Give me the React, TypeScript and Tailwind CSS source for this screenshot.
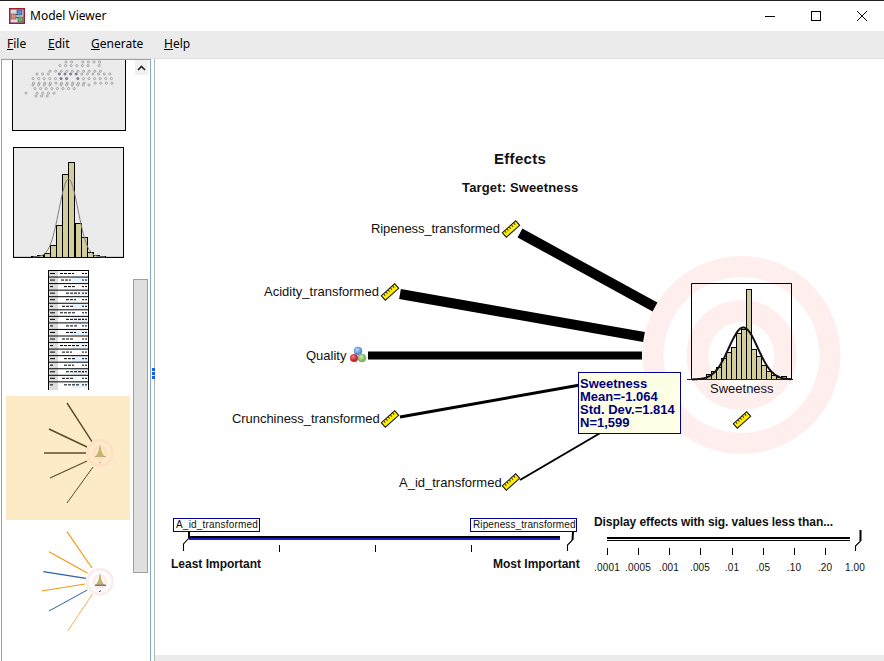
const sans = "font-['Liberation_Sans',Arial,sans-serif]";
const ui = "font-['Noto_Sans',sans-serif]";

const bell = (cx: number, base: number, h: number, sigma: number, from: number, to: number) => {
  const pts: string[] = [];
  for (let x = from; x <= to; x += 1) {
    const y = base - h * Math.exp(-((x - cx) * (x - cx)) / (2 * sigma * sigma));
    pts.push(`${x},${y.toFixed(1)}`);
  }
  return pts.join(" ");
};

function Ruler({ x, y }: { x: number; y: number }) {
  return (
    <g transform={`translate(${x} ${y}) rotate(-42)`}>
      <rect x="-9" y="-3" width="18" height="6" fill="#ffee00" stroke="#111" strokeWidth="1" />
      {[-6, -3, 0, 3, 6].map((t) => (
        <line key={t} x1={t} y1="-2.5" x2={t} y2="-0.5" stroke="#333" strokeWidth="1" />
      ))}
    </g>
  );
}

function AppIcon() {
  return (
    <svg width="16" height="16" viewBox="0 0 16 16">
      <rect x="0.75" y="0.75" width="14.5" height="14.5" fill="#d8d8ea" stroke="#9c1c30" strokeWidth="1.5" />
      <line x1="5" y1="8" x2="10" y2="5" stroke="#444" />
      <line x1="5" y1="8" x2="11" y2="11" stroke="#444" />
      <rect x="2" y="6" width="5" height="5" fill="#e08a70" stroke="#555" strokeWidth="0.6" />
      <rect x="8" y="2" width="5" height="5" fill="#5a8ecc" stroke="#345" strokeWidth="0.6" />
      <rect x="9" y="9" width="5" height="5" fill="#76b060" stroke="#354" strokeWidth="0.6" />
    </svg>
  );
}

// rows of the scatter thumbnail, y / first x / last x in page pixels
const scatterRows: [number, number, number][] = [
  [62, 66, 100],
  [65, 60, 100],
  [70, 50, 110],
  [74, 37, 110],
  [78, 33, 115],
  [82, 28, 116],
  [85, 33, 92],
  [88, 35, 85],
  [92, 26, 55],
  [96, 36, 50],
];

function ScatterThumb() {
  const dots: { x: number; y: number; d: number }[] = [];
  scatterRows.forEach(([y, a, b], r) => {
    for (let x = a, i = 0; x <= b; x += 5.6, i += 1) {
      if ((i * 7 + r * 5) % 11 === 3) continue;
      const k = Math.abs(x - 68) / 24 + Math.abs(y - 76) / 7;
      dots.push({ x: x - 12, y: y - 60 + ((i * 3 + r) % 3) * 0.6, d: k });
    }
  });
  return (
    <svg width="114" height="72" viewBox="0 0 114 72" className="block">
      <rect x="0.5" y="-2" width="113" height="72.5" fill="#ebebeb" stroke="#000" />
      {dots.map((p, i) => (
        <circle key={i} cx={p.x} cy={p.y} r="1.1" fill={p.d < 0.8 ? "#8a8aa0" : "#e4e4e4"} stroke={p.d < 0.8 ? "#606078" : "#909090"} strokeWidth="0.7" />
      ))}
    </svg>
  );
}

const histBars = [
  [18, 109], [24, 108], [31, 106], [37, 98], [43, 78], [49, 27], [55, 15], [62, 76], [68, 90], [74, 105], [80, 108], [86, 109],
];

function HistThumb() {
  return (
    <svg width="112" height="112" viewBox="0 0 112 112" className="block">
      <rect x="0.5" y="0.5" width="110" height="110" fill="#ebebeb" stroke="#000" />
      <line x1="1" y1="109.5" x2="110" y2="109.5" stroke="#ccc" />
      {histBars.map(([x, t], i) => (
        <rect key={i} x={x + 0.5} y={t + 0.5} width="6" height={110 - t} fill="#d2cd9a" stroke="#000" />
      ))}
      <polyline points={bell(55.5, 110, 78, 9.5, 20, 92)} fill="none" stroke="#808080" />
    </svg>
  );
}

const dashRows = [
  [14, 2, 20, 9], [10, 3, 22, 10], [12, 6, 20, 8], [14, 8, 24, 6], [10, 8, 18, 6], [12, 4, 22, 12],
  [16, 2, 24, 4], [18, 8, 28, 0], [12, 8, 20, 6], [10, 8, 18, 12], [12, 4, 24, 0], [20, 2, 30, 6],
  [10, 4, 26, 0], [12, 6, 24, 8], [10, 6, 22, 12], [18, 8, 26, 0], [12, 4, 20, 8], [16, 6, 26, 0],
];

function TableThumb() {
  return (
    <svg width="41" height="120" viewBox="0 0 41 120" className="block">
      <rect x="0" y="0" width="41" height="120" fill="#fff" />
      <rect x="1" y="0" width="9" height="120" fill="#dcdcdc" />
      {dashRows.map((r, i) => (
        <g key={i}>
          {i % 2 === 1 && <rect x="24" y={i * 6.55} width="16" height="6.5" fill="#e8f3fb" />}
          <line x1="0" y1={i * 6.55 + 0.5} x2="41" y2={i * 6.55 + 0.5} stroke="#000" />
          <line x1="2" y1={i * 6.55 + 3.5} x2={2 + (i % 3 === 2 ? 3 : 5)} y2={i * 6.55 + 3.5} stroke="#000" />
          <line x1={r[1] + 10} y1={i * 6.55 + 3.5} x2={r[1] + 10 + r[0]} y2={i * 6.55 + 3.5} stroke="#000" strokeDasharray="3 1" />
          <line x1="34" y1={i * 6.55 + 3.5} x2="40" y2={i * 6.55 + 3.5} stroke="#000" strokeDasharray="2 1" />
        </g>
      ))}
      <line x1="0.5" y1="0" x2="0.5" y2="120" stroke="#000" />
      <line x1="40.5" y1="0" x2="40.5" y2="120" stroke="#000" />
    </svg>
  );
}

function MiniTarget({ x, y, ring, color }: { x: number; y: number; ring: string; color: string }) {
  return (
    <g>
      <circle cx={x} cy={y} r="12.5" fill="none" stroke={ring} strokeWidth="3" />
      <circle cx={x} cy={y} r="6" fill="none" stroke={ring} strokeWidth="3" />
      <path d={`M${x - 4} ${y + 3} L${x - 1.5} ${y - 2} L${x} ${y - 9} L${x + 1.5} ${y - 2} L${x + 4} ${y + 3} Z`} fill="#c2b66a" />
      <line x1={x - 5} y1={y + 3.5} x2={x + 6} y2={y + 3.5} stroke={color} strokeWidth="0.8" />
      <line x1={x - 1} y1={y + 10} x2={x + 1} y2={y + 9} stroke={color} strokeWidth="0.8" />
    </g>
  );
}

function SelectedThumb() {
  const spokes: [number, number, number, number, number][] = [
    [61, 7, 86, 45.7, 1.4],
    [43, 33, 81, 51, 1.4],
    [38, 57, 80, 57, 1.4],
    [44, 82, 81, 65, 1.1],
    [61, 107, 87, 71, 1],
  ];
  return (
    <svg width="124" height="124" viewBox="0 0 124 124" className="block">
      <rect width="124" height="124" fill="#fdebc8" />
      {spokes.map(([a, b, c, d, w], i) => (
        <line key={i} x1={a} y1={b} x2={c} y2={d} stroke="#5e4a25" strokeWidth={w} />
      ))}
      <MiniTarget x={94} y={57} ring="#fde0c6" color="#b0a060" />
    </svg>
  );
}

function LastThumb() {
  const spokes: [number, number, number, number, string, number][] = [
    [61, 1.7, 86, 38, "#f39a13", 1.2],
    [43, 21.7, 81.3, 43, "#f39a13", 1.2],
    [37.3, 41.7, 80, 48.3, "#2f5db4", 1.2],
    [35.7, 61, 79, 54, "#f39a13", 1.2],
    [43, 81, 81.3, 60, "#2f5db4", 1],
    [61.7, 101, 86.3, 64.3, "#f39a13", 0.8],
  ];
  return (
    <svg width="124" height="112" viewBox="0 0 124 112" className="block">
      {spokes.map(([a, b, c, d, s, w], i) => (
        <line key={i} x1={a} y1={b} x2={c} y2={d} stroke={s} strokeWidth={w} />
      ))}
      <MiniTarget x={94} y={51.7} ring="#fdecec" color="#111" />
    </svg>
  );
}

function ThumbList() {
  return (
    <div className="flex w-[131px] flex-col">
      <div className="ml-[10px]"><ScatterThumb /></div>
      <div className="ml-[11px] mt-[15px]"><HistThumb /></div>
      <div className="ml-[46px] mt-[11px]"><TableThumb /></div>
      <div className="ml-[4px] mt-[6px]"><SelectedThumb /></div>
      <div className="ml-[4px] mt-[10px]"><LastThumb /></div>
    </div>
  );
}

function Scrollbar() {
  return (
    <div className="flex w-[16px] flex-col">
      <div className="ml-[2px] flex h-[15px] w-[13px] items-center justify-center bg-[#f0f0f0]">
        <svg width="9" height="6" viewBox="0 0 9 6">
          <path d="M1 5 L4.5 1.5 L8 5" fill="none" stroke="#222" strokeWidth="1.6" />
        </svg>
      </div>
      <div className="mt-[204px] h-[294px] w-[15px] border border-[#a0a0a0] bg-[#dfdfdf]" />
    </div>
  );
}

const sigLabels: [string, number][] = [
  [".0001", 607], [".0005", 638], [".001", 669], [".005", 700], [".01", 732], [".05", 763], [".10", 794], [".20", 825], ["1.00", 855],
];

const bars: [number, number][] = [
  [706, 374], [711, 371], [716, 367], [721, 358], [726, 352], [731, 347], [736, 333], [741, 329], [746, 289],
  [751, 349], [756, 356], [761, 365], [766, 371], [771, 375], [776, 377], [781, 376],
];

function Diagram() {
  return (
    <svg className="absolute left-0 top-0" width="729" height="596" viewBox="155 59 729 596">
      <circle cx="741.5" cy="355" r="88.5" fill="none" stroke="#ffeeee" strokeWidth="21" />
      <circle cx="741.5" cy="355" r="44" fill="none" stroke="#ffeeee" strokeWidth="22" />

      <line x1="520" y1="233" x2="655" y2="307" stroke="#000" strokeWidth="10" />
      <line x1="400" y1="294" x2="644" y2="337" stroke="#000" strokeWidth="10" />
      <line x1="368" y1="355.5" x2="642" y2="355.5" stroke="#000" strokeWidth="8" />
      <line x1="400" y1="417" x2="580" y2="385" stroke="#000" strokeWidth="3" />
      <line x1="520" y1="480" x2="602" y2="432" stroke="#000" strokeWidth="2" />

      <path d="M691.5 379 V283.5 H791.5 V379" fill="none" stroke="#000" />
      {bars.map(([x, t]) => (
        <rect key={x} x={x + 0.5} y={t + 0.5} width="5" height={379 - t} fill="#d2cd9a" stroke="#000" />
      ))}
      <line x1="687" y1="379.5" x2="793" y2="379.5" stroke="#222" />
      <polyline points={bell(743.3, 379.5, 52, 14.5, 692, 791)} fill="none" stroke="#111" strokeWidth="2" />

      <Ruler x={511} y={229} />
      <Ruler x={390} y={292} />
      <Ruler x={390} y={419} />
      <Ruler x={511} y={482} />
      <Ruler x={742} y={420} />

      <defs>
        <radialGradient id="b" cx="40%" cy="35%"><stop offset="0" stopColor="#b8d8f8" /><stop offset="1" stopColor="#5a90d8" /></radialGradient>
        <radialGradient id="r" cx="40%" cy="35%"><stop offset="0" stopColor="#f08080" /><stop offset="1" stopColor="#c02030" /></radialGradient>
        <radialGradient id="g" cx="40%" cy="35%"><stop offset="0" stopColor="#d0eab0" /><stop offset="1" stopColor="#80b860" /></radialGradient>
      </defs>
      <circle cx="358" cy="351" r="4" fill="url(#b)" stroke="#5080c0" strokeWidth="0.5" />
      <circle cx="354" cy="358" r="4" fill="url(#r)" />
      <circle cx="362" cy="358" r="4" fill="url(#g)" stroke="#80a060" strokeWidth="0.5" />

      <line x1="189" y1="537" x2="560" y2="537" stroke="#000" strokeWidth="2" />
      <line x1="189" y1="539" x2="560" y2="539" stroke="#1c1cc8" strokeWidth="2" />
      <path d="M189 531 V538" fill="none" stroke="#000" strokeWidth="2" />
      <path d="M183.5 551 V544 L189 538" fill="none" stroke="#000" strokeWidth="1.1" />
      <path d="M573 532 L572.5 540" fill="none" stroke="#000" strokeWidth="2" />
      <path d="M572.5 540 L567.5 545 V551" fill="none" stroke="#000" strokeWidth="1.1" />
      {[279, 375, 471].map((x) => (
        <line key={x} x1={x + 0.5} y1="545" x2={x + 0.5} y2="552" stroke="#000" />
      ))}

      <line x1="607" y1="538" x2="850" y2="538" stroke="#000" strokeWidth="2" />
      <line x1="607" y1="540.5" x2="850" y2="540.5" stroke="#000" strokeWidth="1" />
      <path d="M860.5 530 V541" fill="none" stroke="#000" strokeWidth="2" />
      <path d="M860.5 541 L855.5 546 V551" fill="none" stroke="#000" strokeWidth="1.1" />
      {sigLabels.slice(0, 8).map(([l, x]) => (
        <line key={l} x1={x + 0.5} y1="548" x2={x + 0.5} y2="555" stroke="#000" />
      ))}
    </svg>
  );
}

function Label({ className, children }: { className: string; children: React.ReactNode }) {
  return <div className={`absolute whitespace-nowrap ${sans} ${className}`}>{children}</div>;
}

function Canvas() {
  return (
    <div className="relative flex-1 overflow-hidden bg-white text-[#111]">
      <Diagram />
      <Label className="left-[339px] top-[91px] text-[15px] leading-[18px] font-bold tracking-[0.3px]">Effects</Label>
      <Label className="left-[307px] top-[121px] text-[13px] leading-[15px] font-bold tracking-[0.15px]">Target: Sweetness</Label>

      <Label className="left-[216px] top-[162px] text-[13px] leading-[16px] tracking-[-0.1px]">Ripeness_transformed</Label>
      <Label className="left-[109px] top-[225px] text-[13px] leading-[16px]">Acidity_transformed</Label>
      <Label className="left-[151px] top-[289px] text-[13px] leading-[16px]">Quality</Label>
      <Label className="left-[77px] top-[352px] text-[13px] leading-[16px] tracking-[-0.05px]">Crunchiness_transformed</Label>
      <Label className="left-[244px] top-[416px] text-[13px] leading-[16px]">A_id_transformed</Label>
      <Label className="left-[555px] top-[322px] text-[13px] leading-[16px]">Sweetness</Label>

      <div className={`absolute left-[423px] top-[313px] h-[62px] w-[103px] border border-[#00008b] bg-[#ffffe6] px-[1px] pt-[4px] text-[13px] leading-[13px] font-bold text-[#000080] ${sans}`}>
        <div>Sweetness</div>
        <div>Mean=-1.064</div>
        <div>Std. Dev.=1.814</div>
        <div>N=1,599</div>
      </div>

      <Label className="left-[18px] top-[459px] h-[14px] w-[87px] border border-[#00008b] bg-white px-[2px] text-[10px] leading-[12px] tracking-[0.2px]">A_id_transformed</Label>
      <Label className="left-[315px] top-[459px] h-[14px] w-[107px] border border-[#00008b] bg-white px-[2px] text-[10px] leading-[12px] tracking-[0.1px]">Ripeness_transformed</Label>
      <Label className="left-[16px] top-[498px] text-[12px] leading-[15px] font-bold">Least Important</Label>
      <Label className="left-[338px] top-[498px] text-[12px] leading-[15px] font-bold">Most Important</Label>
      <Label className="left-[439px] top-[456px] text-[12px] leading-[15px] font-bold tracking-[-0.07px]">Display effects with sig. values less than...</Label>

      <Label className="left-[433px] top-[502px] w-[38px] text-center text-[10px] leading-[13px] tracking-[0.15px]">.0001</Label>
      <Label className="left-[464px] top-[502px] w-[38px] text-center text-[10px] leading-[13px] tracking-[0.15px]">.0005</Label>
      <Label className="left-[495px] top-[502px] w-[38px] text-center text-[10px] leading-[13px] tracking-[0.15px]">.001</Label>
      <Label className="left-[526px] top-[502px] w-[38px] text-center text-[10px] leading-[13px] tracking-[0.15px]">.005</Label>
      <Label className="left-[558px] top-[502px] w-[38px] text-center text-[10px] leading-[13px] tracking-[0.15px]">.01</Label>
      <Label className="left-[589px] top-[502px] w-[38px] text-center text-[10px] leading-[13px] tracking-[0.15px]">.05</Label>
      <Label className="left-[620px] top-[502px] w-[38px] text-center text-[10px] leading-[13px] tracking-[0.15px]">.10</Label>
      <Label className="left-[651px] top-[502px] w-[38px] text-center text-[10px] leading-[13px] tracking-[0.15px]">.20</Label>
      <Label className="left-[681px] top-[502px] w-[38px] text-center text-[10px] leading-[13px] tracking-[0.15px]">1.00</Label>
    </div>
  );
}

export default function App() {
  return (
    <div className={`flex h-[661px] w-[884px] flex-col overflow-hidden bg-white ${ui}`}>
      <div className="flex h-[31px] items-center border-t border-[#222] bg-white">
        <div className="ml-[9px] mr-[5px]"><AppIcon /></div>
        <span className="text-[12px] leading-[16px] text-black">Model Viewer</span>
        <div className="ml-auto mr-[-1px] flex">
          <button className="flex h-[30px] w-[46px] items-center justify-center">
            <svg width="10" height="10" viewBox="0 0 10 10"><line x1="0" y1="5.5" x2="10" y2="5.5" stroke="#000" /></svg>
          </button>
          <button className="flex h-[30px] w-[46px] items-center justify-center">
            <svg width="10" height="10" viewBox="0 0 10 10"><rect x="0.5" y="0.5" width="9" height="9" fill="none" stroke="#000" /></svg>
          </button>
          <button className="flex h-[30px] w-[46px] items-center justify-center">
            <svg width="10" height="10" viewBox="0 0 10 10"><path d="M0 0 L10 10 M10 0 L0 10" stroke="#000" strokeWidth="1" /></svg>
          </button>
        </div>
      </div>

      <div className="flex h-[28px] items-center border-b border-[#e0e0e0] bg-[#ebebeb] pb-[1px] pl-[7px] text-[12px] leading-[16px] text-black">
        <span className="w-[41px]"><u>F</u>ile</span>
        <span className="w-[43px]"><u>E</u>dit</span>
        <span className="w-[73px]"><u>G</u>enerate</span>
        <span><u>H</u>elp</span>
      </div>

      <div className="flex min-h-0 flex-1">
        <div className="ml-[1px] flex w-[150px] overflow-hidden border-x border-t border-[#7ba7d7] bg-white">
          <ThumbList />
          <Scrollbar />
        </div>
        <div className="relative w-[4px] border-r border-[#b4b4b4] bg-white">
          <div className="absolute left-[1px] top-[309px] flex flex-col gap-[1px]">
            <div className="size-[3px] bg-[#1c5cf0]" />
            <div className="size-[3px] bg-[#1c5cf0]" />
            <div className="size-[3px] bg-[#1c5cf0]" />
          </div>
        </div>
        <div className="flex min-w-0 flex-1 flex-col">
          <Canvas />
          <div className="h-[6px] bg-[#ebebeb]" />
        </div>
      </div>
    </div>
  );
}
